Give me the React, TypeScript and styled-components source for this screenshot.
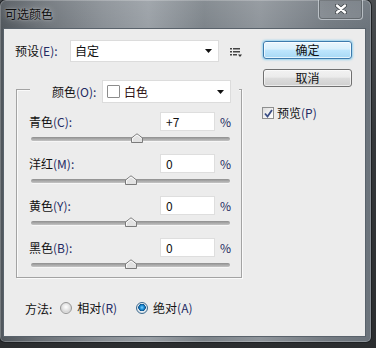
import React from 'react';
import styled, { createGlobalStyle } from 'styled-components';

const Global = createGlobalStyle`
  html, body { margin: 0; padding: 0; }
  body {
    width: 376px; height: 348px; overflow: hidden;
    background: #2c2e30;
    font-family: "Noto Sans CJK SC", "Microsoft YaHei", sans-serif;
    font-size: 12px;
    color: #111;
  }
`;

const Screen = styled.div`
  width: 376px;
  height: 348px;
  background: linear-gradient(to bottom, #4a4d50 0%, #34373a 40%, #2b2d2f 100%);
`;

const Window = styled.div`
  width: 371px;
  height: 342px;
  box-sizing: border-box;
  padding: 0 6px 6px 4px;
  border-radius: 6px 6px 5px 5px;
  display: flex;
  flex-direction: column;
  background:
    linear-gradient(to bottom, rgba(255,255,255,0.08) 0%, rgba(0,0,0,0) 30px),
    linear-gradient(to right, #50565c 0%, #6a7076 10%, #8a9096 28%, #9aa0a6 40%, #7d848a 55%, #8f959b 70%, #747b82 88%, #6b737b 100%);
  box-shadow: inset 0 0 0 1px rgba(255,255,255,0.22), 0 0 0 1px #1e2124;
`;

const TitleBar = styled.div`
  height: 29px;
  display: flex;
  justify-content: space-between;
  align-items: flex-start;
`;

const Title = styled.div`
  margin: 6px 0 0 1px;
  font-size: 12px;
  line-height: 16px;
  color: #101010;
  text-shadow: 0 0 6px rgba(255,255,255,0.55), 0 0 2px rgba(255,255,255,0.4);
`;

const CloseButton = styled.div`
  width: 45px;
  height: 20px;
  margin-right: 2px;
  box-sizing: border-box;
  border: 1px solid rgba(230,235,240,0.55);
  border-top: none;
  border-radius: 0 0 4px 4px;
  background: linear-gradient(to bottom, rgba(255,255,255,0.05), rgba(255,255,255,0.12));
  box-shadow: inset 0 0 0 1px rgba(40,45,50,0.35);
  display: flex;
  align-items: center;
  justify-content: center;
  padding-bottom: 1px;
`;

const Content = styled.div`
  height: 307px;
  background: #ececec;
  box-shadow: 0 0 0 1px #59626b;
  display: grid;
  grid-template-columns: 246px 1fr;
`;

const LeftCol = styled.div`
  display: flex;
  flex-direction: column;
`;

const RightCol = styled.div`
  display: flex;
  flex-direction: column;
  padding: 12px 0 0 13px;
`;

const PresetRow = styled.div`
  margin: 11px 0 0 11px;
  height: 22px;
  display: flex;
  align-items: center;
`;

const Label = styled.span<{ $w?: number }>`
  width: ${p => (p.$w ? `${p.$w}px` : 'auto')};
  flex: ${p => (p.$w ? 'none' : '1')};
  line-height: 16px;
  white-space: nowrap;
`;

const Key = styled.span`
  color: #232a63;
`;

const Select = styled.div<{ $w: number; $h: number }>`
  width: ${p => p.$w}px;
  height: ${p => p.$h}px;
  box-sizing: border-box;
  background: #fff;
  border: 1px solid #dcdcdc;
  display: flex;
  align-items: center;
  padding: 0 6px 0 4px;
  gap: 4px;
  line-height: 16px;
`;

const SelectText = styled.span<{ $red?: boolean }>`
  flex: 1;
  color: ${p => (p.$red ? '#2e1212' : '#111')};
`;

const Swatch = styled.span`
  width: 13px;
  height: 13px;
  box-sizing: border-box;
  background: #fff;
  border: 1px solid #8c8c8c;
  border-radius: 1px;
`;

const MenuIcon = styled.svg`
  margin-left: 11px;
  margin-top: 3px;
`;

const Group = styled.div`
  margin: 27px 0 0 12px;
  width: 226px;
  height: 189px;
  box-sizing: border-box;
  border: 1px solid #a3a3a3;
  box-shadow: inset 1px 1px 0 #fafafa, 1px 1px 0 #fafafa;
  display: flex;
  flex-direction: column;
`;

const GroupHeader = styled.div`
  margin: -10px 2px 0 13px;
  height: 23px;
  background: #ececec;
  display: flex;
  align-items: center;
  padding-left: 22px;
`;

const Rows = styled.div`
  padding: 9px 10px 0 12px;
  display: flex;
  flex-direction: column;
  gap: 7px;
`;

const RowBlock = styled.div`
  display: flex;
  flex-direction: column;
`;

const FieldRow = styled.div`
  height: 19px;
  display: flex;
  align-items: center;
`;

const NumInput = styled.div`
  width: 55px;
  height: 19px;
  box-sizing: border-box;
  background: #fff;
  border: 1px solid #dedede;
  padding-left: 5px;
  display: flex;
  align-items: center;
  line-height: 16px;
`;

const Percent = styled.span`
  width: 11px;
  margin-left: 5px;
  text-align: right;
  line-height: 16px;
  color: #222a5e;
`;

const SliderArea = styled.div`
  height: 16px;
  display: flex;
  align-items: center;
  padding: 0 1px 0 2px;
`;

const Track = styled.div`
  position: relative;
  flex: 1;
  height: 4px;
  border-radius: 2px;
  background: linear-gradient(to bottom, #8e8e8e 0%, #a9a9a9 50%, #c4c4c4 100%);
  box-shadow: 0 1px 0 #f6f6f6;
`;

const Thumb = styled.svg`
  position: absolute;
  top: -4px;
  margin-left: -6px;
`;

const MethodRow = styled.div`
  margin: 22px 0 0 21px;
  height: 16px;
  display: flex;
  align-items: center;
`;

const RadioItem = styled.span<{ $gap: number }>`
  display: flex;
  align-items: center;
  margin-left: ${p => p.$gap}px;
  gap: 5px;
  line-height: 16px;
`;

const Radio = styled.span<{ $on?: boolean }>`
  width: 12px;
  height: 12px;
  box-sizing: border-box;
  border-radius: 50%;
  border: 1px solid ${p => (p.$on ? '#3c6a90' : '#979797')};
  background: ${p =>
    p.$on
      ? 'radial-gradient(circle at 50% 45%, #7fd0ff 0, #1d8fd6 2px, #0a4f8a 3.5px, #e8eef2 4px, #d4dbe0 6px)'
      : 'radial-gradient(circle at 50% 40%, #ffffff 0, #f0f0f0 2px, #d6d6d6 5px, #ececec 6px)'};
`;

const Button = styled.div<{ $primary?: boolean }>`
  width: 89px;
  height: 18px;
  box-sizing: border-box;
  border-radius: 3px;
  border: 1px solid ${p => (p.$primary ? '#3d7bad' : '#707070')};
  background: ${p =>
    p.$primary
      ? 'linear-gradient(to bottom, #eaf6fd 0%, #d9f0fc 45%, #bee6fd 50%, #a7d9f5 100%)'
      : 'linear-gradient(to bottom, #f2f2f2 0%, #ebebeb 45%, #dddddd 50%, #cfcfcf 100%)'};
  box-shadow: ${p =>
    p.$primary
      ? 'inset 0 0 0 1px rgba(255,255,255,0.7), 0 0 2px 1px rgba(80,190,240,0.55)'
      : 'inset 0 0 0 1px rgba(255,255,255,0.6)'};
  display: flex;
  align-items: center;
  justify-content: center;
  line-height: 16px;
  & + & {
    margin-top: 10px;
  }
`;

const CheckRow = styled.div`
  margin: 18px 0 0 -1px;
  display: flex;
  align-items: center;
  gap: 3px;
  line-height: 16px;
`;

const CheckBox = styled.span`
  width: 12px;
  height: 12px;
  box-sizing: border-box;
  border: 1px solid #8e8f8f;
  background: linear-gradient(135deg, #dcdcdc 0%, #f4f4f4 60%, #ffffff 100%);
  display: flex;
  align-items: center;
  justify-content: center;
`;

const rows = [
  { name: '青色', key: 'C', value: '+7', num: 7 },
  { name: '洋红', key: 'M', value: '0', num: 0 },
  { name: '黄色', key: 'Y', value: '0', num: 0 },
  { name: '黑色', key: 'B', value: '0', num: 0 },
];

const Arrow = () => (
  <svg width="7" height="4" viewBox="0 0 7 4">
    <path d="M0 0 H7 L3.5 4 Z" fill="#111" />
  </svg>
);

export default function App() {
  return (
    <>
      <Global />
      <Screen>
        <Window>
          <TitleBar>
            <Title>可选颜色</Title>
            <CloseButton>
              <svg width="12" height="10" viewBox="0 0 12 10">
                <path d="M2 1.5 L10 8.5 M10 1.5 L2 8.5" stroke="#3a3f44" strokeWidth="4" strokeLinecap="round" />
                <path d="M2 1.5 L10 8.5 M10 1.5 L2 8.5" stroke="#ffffff" strokeWidth="2.4" strokeLinecap="round" />
              </svg>
            </CloseButton>
          </TitleBar>
          <Content>
            <LeftCol>
              <PresetRow>
                <Label $w={55}>
                  预设<Key>(E):</Key>
                </Label>
                <Select $w={149} $h={22}>
                  <SelectText>自定</SelectText>
                  <Arrow />
                </Select>
                <MenuIcon width="12" height="9" viewBox="0 0 12 9">
                  <rect x="0" y="0" width="2" height="1.5" fill="#444" />
                  <rect x="3" y="0" width="7" height="1.5" fill="#444" />
                  <rect x="0" y="3" width="2" height="1.5" fill="#444" />
                  <rect x="3" y="3" width="7" height="1.5" fill="#444" />
                  <rect x="0" y="6" width="2" height="1.5" fill="#444" />
                  <rect x="3" y="6" width="4" height="1.5" fill="#444" />
                  <path d="M8 6.5 H12 L10 9 Z" fill="#333" />
                </MenuIcon>
              </PresetRow>
              <Group>
                <GroupHeader>
                  <Label $w={50}>
                    颜色<Key>(O):</Key>
                  </Label>
                  <Select $w={129} $h={23}>
                    <Swatch />
                    <SelectText $red>白色</SelectText>
                    <Arrow />
                  </Select>
                </GroupHeader>
                <Rows>
                  {rows.map(r => (
                    <RowBlock key={r.key}>
                      <FieldRow>
                        <Label>
                          {r.name}
                          <Key>({r.key}):</Key>
                        </Label>
                        <NumInput>{r.value}</NumInput>
                        <Percent>%</Percent>
                      </FieldRow>
                      <SliderArea>
                        <Track>
                          <Thumb
                            width="12"
                            height="10"
                            viewBox="0 0 12 10"
                            style={{ left: `${50 + r.num / 2}%` }}
                          >
                            <path
                              d="M0.5 9.5 V5 L6 0.8 L11.5 5 V9.5 Z"
                              fill="#e2e2e2"
                              stroke="#7b7b7b"
                              strokeWidth="1"
                            />
                            <path d="M1.5 8.5 V5.4 L6 2 L10.5 5.4" fill="none" stroke="#fafafa" strokeWidth="1" />
                          </Thumb>
                        </Track>
                      </SliderArea>
                    </RowBlock>
                  ))}
                </Rows>
              </Group>
              <MethodRow>
                <span>方法:</span>
                <RadioItem $gap={8}>
                  <Radio />
                  <span>
                    相对<Key>(R)</Key>
                  </span>
                </RadioItem>
                <RadioItem $gap={19}>
                  <Radio $on />
                  <span>
                    绝对<Key>(A)</Key>
                  </span>
                </RadioItem>
              </MethodRow>
            </LeftCol>
            <RightCol>
              <Button $primary>确定</Button>
              <Button>取消</Button>
              <CheckRow>
                <CheckBox>
                  <svg width="9" height="9" viewBox="0 0 9 9">
                    <path d="M1 4.5 L3.5 7.5 L8 1" fill="none" stroke="#3b4f86" strokeWidth="1.8" />
                  </svg>
                </CheckBox>
                <span>
                  预览<Key>(P)</Key>
                </span>
              </CheckRow>
            </RightCol>
          </Content>
        </Window>
      </Screen>
    </>
  );
}
